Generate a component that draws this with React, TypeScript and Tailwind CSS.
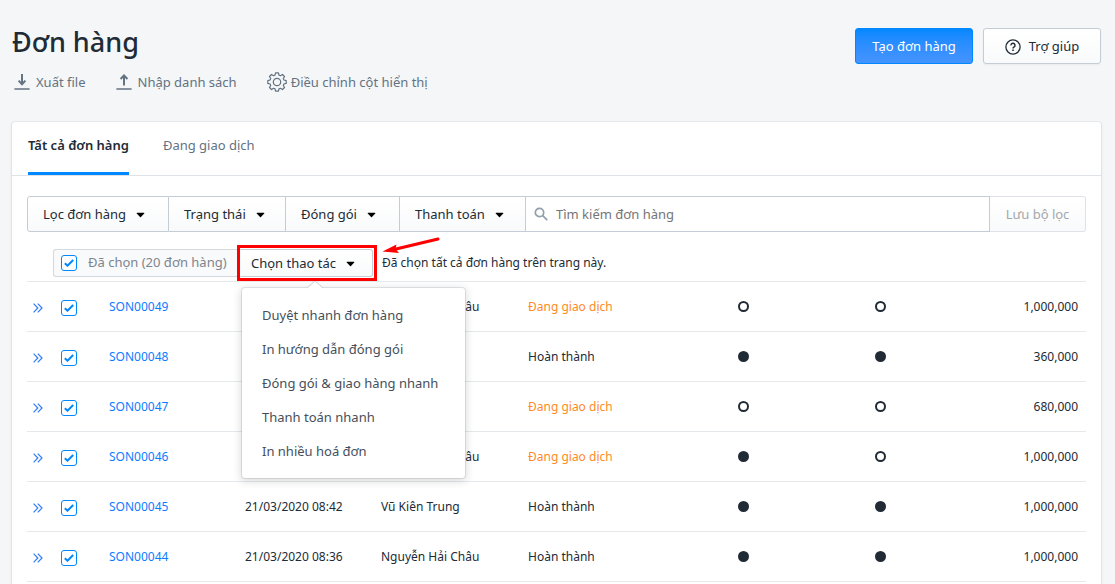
import { useState } from "react";
import clsx from "clsx";

type Order = {
  code: string;
  createdAt?: string;
  customer?: string;
  done: boolean;
  packed: boolean;
  paid: boolean;
  total: string;
};

const ORDERS: Order[] = [
  { code: "SON00049", customer: "Nguyễn Hải Châu", done: false, packed: false, paid: false, total: "1,000,000" },
  { code: "SON00048", done: true, packed: true, paid: true, total: "360,000" },
  { code: "SON00047", done: false, packed: false, paid: false, total: "680,000" },
  { code: "SON00046", customer: "Nguyễn Hải Châu", done: false, packed: true, paid: false, total: "1,000,000" },
  { code: "SON00045", createdAt: "21/03/2020 08:42", customer: "Vũ Kiên Trung", done: true, packed: true, paid: true, total: "1,000,000" },
  { code: "SON00044", createdAt: "21/03/2020 08:36", customer: "Nguyễn Hải Châu", done: true, packed: true, paid: true, total: "1,000,000" },
];

const FILTERS = [
  { label: "Lọc đơn hàng", width: "w-[142px] rounded-l-[3px] border-l" },
  { label: "Trạng thái", width: "w-[117px]" },
  { label: "Đóng gói", width: "w-[114px]" },
  { label: "Thanh toán", width: "w-[126px]" },
];

const ACTIONS = [
  "Duyệt nhanh đơn hàng",
  "In hướng dẫn đóng gói",
  "Đóng gói & giao hàng nhanh",
  "Thanh toán nhanh",
  "In nhiều hoá đơn",
];

const Caret = () => (
  <svg width="9" height="6" viewBox="0 0 10 6" className="shrink-0" aria-hidden>
    <path d="M1.2 .5h7.6a.5.5 0 0 1 .36.85L5.5 5.2a.7.7 0 0 1-1 0L.84 1.35A.5.5 0 0 1 1.2.5z" fill="#000" />
  </svg>
);

const TransferIcon = ({ up }: { up?: boolean }) => (
  <svg width="16" height="18" viewBox="0 0 16 18" fill="none" stroke="#637381" strokeWidth="2" aria-hidden>
    <path d={up ? "M8 12.5V2.5M4.600 6 8 2.400 11.400 6" : "M8 1V11M4.600 7.600 8 11.200l3.400-3.600"} />
    <path d="M1 16h14" strokeLinecap="round" strokeWidth="1.6" />
  </svg>
);

// eight teeth round a circle: rim points at radius 7.2, tooth tips at 9.3
const GEAR_PATH = Array.from({ length: 8 }, (_, i) =>
  [
    [-16, 7.2],
    [-9, 9.3],
    [9, 9.3],
    [16, 7.2],
  ].map(([offset, r]) => {
    const a = ((i * 45 + offset) * Math.PI) / 180;
    return `${(10 + r * Math.sin(a)).toFixed(2)} ${(10 - r * Math.cos(a)).toFixed(2)}`;
  }).join("L"),
).join("L");

const GearIcon = () => (
  <svg width="20" height="20" viewBox="0 0 20 20" fill="none" stroke="#637381" strokeWidth="1.2" strokeLinejoin="round" aria-hidden>
    <circle cx="10" cy="10" r="3.7" />
    <path d={`M${GEAR_PATH}Z`} />
  </svg>
);

const HelpIcon = () => (
  <svg width="16" height="16" viewBox="0 0 16 16" fill="none" stroke="#212b36" aria-hidden>
    <circle cx="8" cy="8" r="7.1" strokeWidth="1.3" />
    <path d="M6 6.4a2 2 0 1 1 2.9 1.7c-.6.3-.9.6-.9 1.3" strokeWidth="1.5" />
    <path d="M8 10.6v1.5" strokeWidth="1.6" />
  </svg>
);

const SearchIcon = () => (
  <svg width="14" height="14" viewBox="0 0 14 14" fill="none" stroke="#919eab" strokeWidth="1.7" aria-hidden>
    <circle cx="5.5" cy="5.5" r="4.2" />
    <path d="m8.7 8.7 4 4" strokeLinecap="round" />
  </svg>
);

type TickProps = {
  label: string;
  checked: boolean;
  onChange: () => void;
};

const Tick = ({ label, checked, onChange }: TickProps) => (
  <span className="grid size-4 shrink-0 place-items-center">
    <input
      type="checkbox"
      aria-label={label}
      checked={checked}
      onChange={onChange}
      className="col-start-1 row-start-1 size-4 appearance-none rounded-[3px] border border-[#c4cdd5] bg-white checked:border-[#0088ff]"
    />
    {checked && (
      <svg width="10" height="8" viewBox="0 0 10 8" className="pointer-events-none col-start-1 row-start-1" aria-hidden>
        <path d="m.8 4.2 2.7 2.5L9.2 1" fill="none" stroke="#0088ff" strokeWidth="2" />
      </svg>
    )}
  </span>
);

const Dot = ({ filled, label }: { filled: boolean; label: string }) => (
  <span
    role="img"
    aria-label={label}
    className={clsx(
      "mx-auto block size-[11px] rounded-full border-2 border-[#212b36]",
      filled && "bg-[#212b36]",
    )}
  />
);

const PageHeader = () => (
  <header className="flex items-start justify-between">
    <div>
      <h1 className="text-[27px] leading-9 font-medium text-[#212b36]">Đơn hàng</h1>
      <div className="mt-3 flex items-center text-[13px] leading-5 text-[#637381]">
        <button type="button" className="ml-0.5 flex items-center gap-1.5">
          <TransferIcon />
          Xuất file
        </button>
        <button type="button" className="ml-[30px] flex items-center gap-1.5">
          <TransferIcon up />
          Nhập danh sách
        </button>
        <button type="button" className="ml-[30px] flex items-center gap-1">
          <GearIcon />
          Điều chỉnh cột hiển thị
        </button>
      </div>
    </div>
    <div className="mt-1 flex gap-2.5 text-[13px]">
      <button
        type="button"
        className="h-9 w-[118px] rounded-[3px] border border-[#0088ff] bg-linear-to-b from-[#0088ff] to-[#4494ff] pt-0.5 text-white"
      >
        Tạo đơn hàng
      </button>
      <button
        type="button"
        className="flex h-9 w-[118px] items-center justify-center gap-2 rounded-[3px] border border-[#c4cdd5] bg-linear-to-b from-white to-[#f9fafb] pt-0.5 text-[#212b36] shadow-xs"
      >
        <HelpIcon />
        Trợ giúp
      </button>
    </div>
  </header>
);

const Tabs = () => (
  <nav className="flex gap-[34px] border-b border-[#dfe3e8] px-4 text-[13px] leading-5">
    <button type="button" className="border-b-3 border-[#0088ff] pt-[13px] pb-[17px] font-semibold text-[#212b36]">
      Tất cả đơn hàng
    </button>
    <button type="button" className="border-b-3 border-transparent pt-[13px] pb-[17px] text-[#637381]">
      Đang giao dịch
    </button>
  </nav>
);

const FilterBar = () => (
  <div className="flex h-9 text-[13px] text-[#212b36]">
    {FILTERS.map((f) => (
      <button
        key={f.label}
        type="button"
        className={clsx(
          "flex shrink-0 items-center gap-2.5 border-y border-r border-[#c4cdd5] bg-linear-to-b from-white to-[#f9fafb] pt-0.5 pl-[15px]",
          f.width,
        )}
      >
        {f.label}
        <Caret />
      </button>
    ))}
    <label className="flex min-w-0 flex-1 items-center gap-2 border-y border-r border-[#c4cdd5] pl-2">
      <SearchIcon />
      <input
        type="text"
        aria-label="Tìm kiếm đơn hàng"
        placeholder="Tìm kiếm đơn hàng"
        className="min-w-0 flex-1 pt-0.5 outline-none placeholder:text-[#757575]"
      />
    </label>
    <button
      type="button"
      disabled
      className="w-24 shrink-0 rounded-r-[3px] border-y border-r border-[#dfe3e8] bg-linear-to-b from-white to-[#f9fafb] pt-0.5 text-[#a3a8ad]"
    >
      Lưu bộ lọc
    </button>
  </div>
);

const ActionMenu = () => (
  <div className="absolute top-[39px] left-px z-10 w-[223px] rounded-[3px] bg-white py-2.5 shadow-[0_0_0_1px_rgba(39,44,48,0.1),0_2px_8px_1px_rgba(39,44,48,0.18)]">
    {/* pointer towards the button */}
    <svg width="18" height="9" viewBox="0 0 18 9" className="absolute -top-2 left-16" aria-hidden>
      <path d="M0 9 9 1l9 8z" fill="#fff" />
      <path d="M1 8 9 .8 17 8" fill="none" stroke="#c9cdd1" />
    </svg>
    <ul>
      {ACTIONS.map((action) => (
        <li key={action}>
          <button type="button" className="block w-full px-5 py-[7px] text-left text-[13px] leading-5 text-[#454f5b]">
            {action}
          </button>
        </li>
      ))}
    </ul>
  </div>
);

const BulkBar = ({ checked, onToggle }: { checked: boolean; onToggle: () => void }) => {
  const [open, setOpen] = useState(true);

  return (
    <div className="flex h-7 items-stretch pl-[26px] text-[13px] text-[#212b36]">
      <div className="flex w-[188px] shrink-0 items-center gap-[11px] rounded-l-[3px] border-y border-l border-[#d3d9df] bg-[#f9fafb] pl-[7px] whitespace-nowrap text-[#7c858e]">
        <Tick label="Chọn tất cả" checked={checked} onChange={onToggle} />
        Đã chọn (20 đơn hàng)
      </div>
      <div className="relative w-[132px] shrink-0">
        <button
          type="button"
          aria-expanded={open}
          onClick={() => setOpen(!open)}
          className="flex h-full w-full items-center gap-2.5 rounded-r-[3px] border border-l-0 border-[#c4cdd5] bg-linear-to-b from-white to-[#f9fafb] pt-0.5 pl-2.5 whitespace-nowrap"
        >
          Chọn thao tác
          <Caret />
        </button>
        <span className="pointer-events-none absolute -inset-1 z-20 border-3 border-[#ff0000]" />
        {open && <ActionMenu />}
        {/* red arrow aimed at the action button */}
        <svg width="58" height="20" viewBox="0 0 58 20" className="pointer-events-none absolute -top-3 left-[141px] z-20" aria-hidden>
          <path d="M14 12 56 2" stroke="#ff0000" strokeWidth="3" strokeLinecap="round" />
          <path d="M.5 14.5 14.5 7.5 13.5 12 17 16z" fill="#ff0000" />
        </svg>
      </div>
      <p className="pl-[9px] text-xs leading-[27px] whitespace-nowrap">Đã chọn tất cả đơn hàng trên trang này.</p>
    </div>
  );
};

const OrderTable = ({ selected, onToggle }: { selected: string[]; onToggle: (code: string) => void }) => (
  <table className="mt-1 w-full table-fixed border-t border-[#e6e9ec] text-xs text-[#212b36]">
    <colgroup>
      <col className="w-[26px]" />
      <col className="w-12" />
      <col className="w-[136px]" />
      <col className="w-[136px]" />
      <col className="w-[147px]" />
      <col className="w-[155px]" />
      <col className="w-[137px]" />
      <col className="w-[137px]" />
      <col className="w-[137px]" />
    </colgroup>
    <tbody>
      {ORDERS.map((o) => (
        <tr key={o.code} className="h-[50px] border-b border-[#e6e9ec]">
          <td className="pt-0.5 pl-1.5">
            <button type="button" aria-label={`Xem nhanh ${o.code}`} className="block">
              <svg width="10" height="10" viewBox="0 0 10 10" fill="none" stroke="#2f7bff" strokeWidth="1.2" aria-hidden>
                <path d="m.6.6 4.2 4.4L.6 9.4M4.8.6 9 5 4.8 9.4" />
              </svg>
            </button>
          </td>
          <td className="pt-0.5 pl-2">
            <Tick label={`Chọn ${o.code}`} checked={selected.includes(o.code)} onChange={() => onToggle(o.code)} />
          </td>
          <td className="px-2">
            <a href={`#${o.code}`} className="text-[#0d7cff]">{o.code}</a>
          </td>
          <td className="px-2 whitespace-nowrap">{o.createdAt}</td>
          <td className="px-2 whitespace-nowrap">{o.customer}</td>
          <td className={clsx("px-2", !o.done && "text-[#ff8a1f]")}>{o.done ? "Hoàn thành" : "Đang giao dịch"}</td>
          <td>
            <Dot filled={o.packed} label={o.packed ? "Đã đóng gói" : "Chưa đóng gói"} />
          </td>
          <td>
            <Dot filled={o.paid} label={o.paid ? "Đã thanh toán" : "Chưa thanh toán"} />
          </td>
          <td className="px-2 text-right">{o.total}</td>
        </tr>
      ))}
    </tbody>
  </table>
);

export default function App() {
  const [selected, setSelected] = useState(ORDERS.map((o) => o.code));

  const toggle = (code: string) =>
    setSelected((prev) => (prev.includes(code) ? prev.filter((c) => c !== code) : [...prev, code]));
  const allChecked = selected.length === ORDERS.length;

  return (
    <div className="flex min-h-screen flex-col bg-[#f4f6f8] pt-6 pr-3.5 pl-3 font-['Noto_Sans','Open_Sans',sans-serif]">
      <PageHeader />
      <main className="mt-[30px] flex-1 rounded-t-[3px] bg-white shadow-[0_0_0_1px_rgba(63,63,68,0.05),0_1px_3px_0_rgba(63,63,68,0.15)]">
        <Tabs />
        <div className="px-[15px] pt-5">
          <FilterBar />
          <div className="mt-[17px]">
            <BulkBar checked={allChecked} onToggle={() => setSelected(allChecked ? [] : ORDERS.map((o) => o.code))} />
          </div>
          <OrderTable selected={selected} onToggle={toggle} />
        </div>
      </main>
    </div>
  );
}
